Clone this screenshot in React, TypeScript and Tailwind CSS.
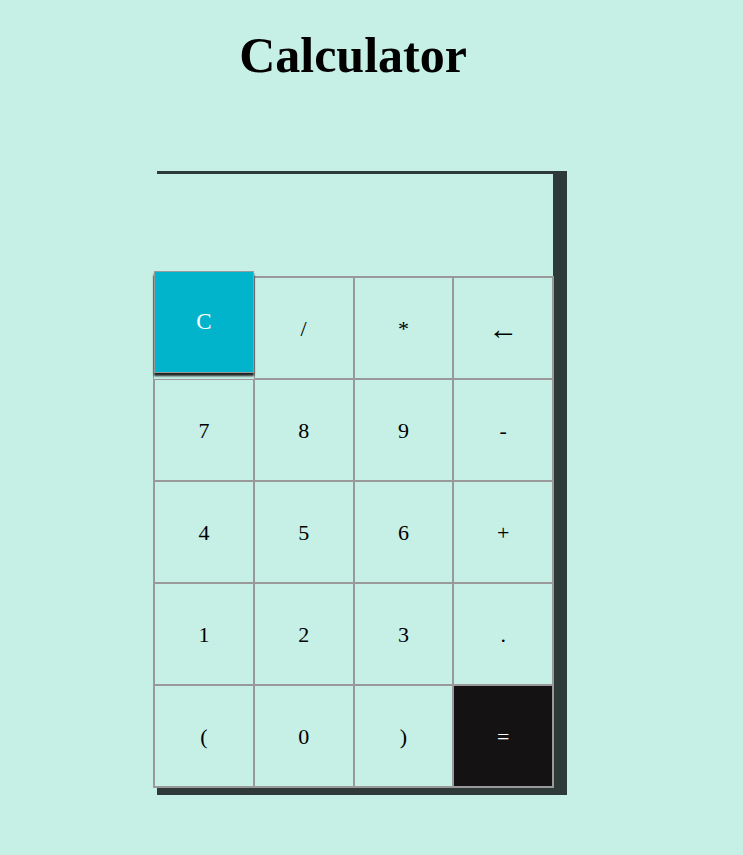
const keys = [
  'C', '/', '*', '←',
  '7', '8', '9', '-',
  '4', '5', '6', '+',
  '1', '2', '3', '.',
  '(', '0', ')', '=',
];

function Key({ label }: { label: string }) {
  if (label === 'C') {
    return (
      <button className="h-[102px] -translate-y-[6px] border border-[#999] bg-[#02b4cb] text-[23px] text-white shadow-[0_3px_2px_rgba(0,0,0,0.85)]">
        {label}
      </button>
    );
  }
  if (label === '=') {
    return (
      <button className="h-[102px] border border-[#999] bg-[#141213] text-[22px] text-white">
        {label}
      </button>
    );
  }
  return (
    <button
      className={
        label === '←'
          ? 'h-[102px] border border-[#999] text-[30px] text-black'
          : 'h-[102px] border border-[#999] text-[22px] text-black'
      }
    >
      {label}
    </button>
  );
}

export default function App() {
  return (
    <div className="min-h-screen bg-[#c6efe5] font-['Liberation_Serif',serif] text-black">
      <div className="w-[706px] pt-[28px]">
        <h1 className="text-center text-[50px] font-bold leading-[55px]">Calculator</h1>
      </div>

      <div className="ml-[157px] mt-[88px] w-[410px] border-t-[3px] border-r-[14px] border-b-[7px] border-[#2d3a38]">
        <div className="h-[102px]" />
        <div className="-ml-[4px] grid w-[401px] grid-cols-4 border border-[#999]">
          {keys.map((k) => (
            <Key key={k} label={k} />
          ))}
        </div>
      </div>
    </div>
  );
}
